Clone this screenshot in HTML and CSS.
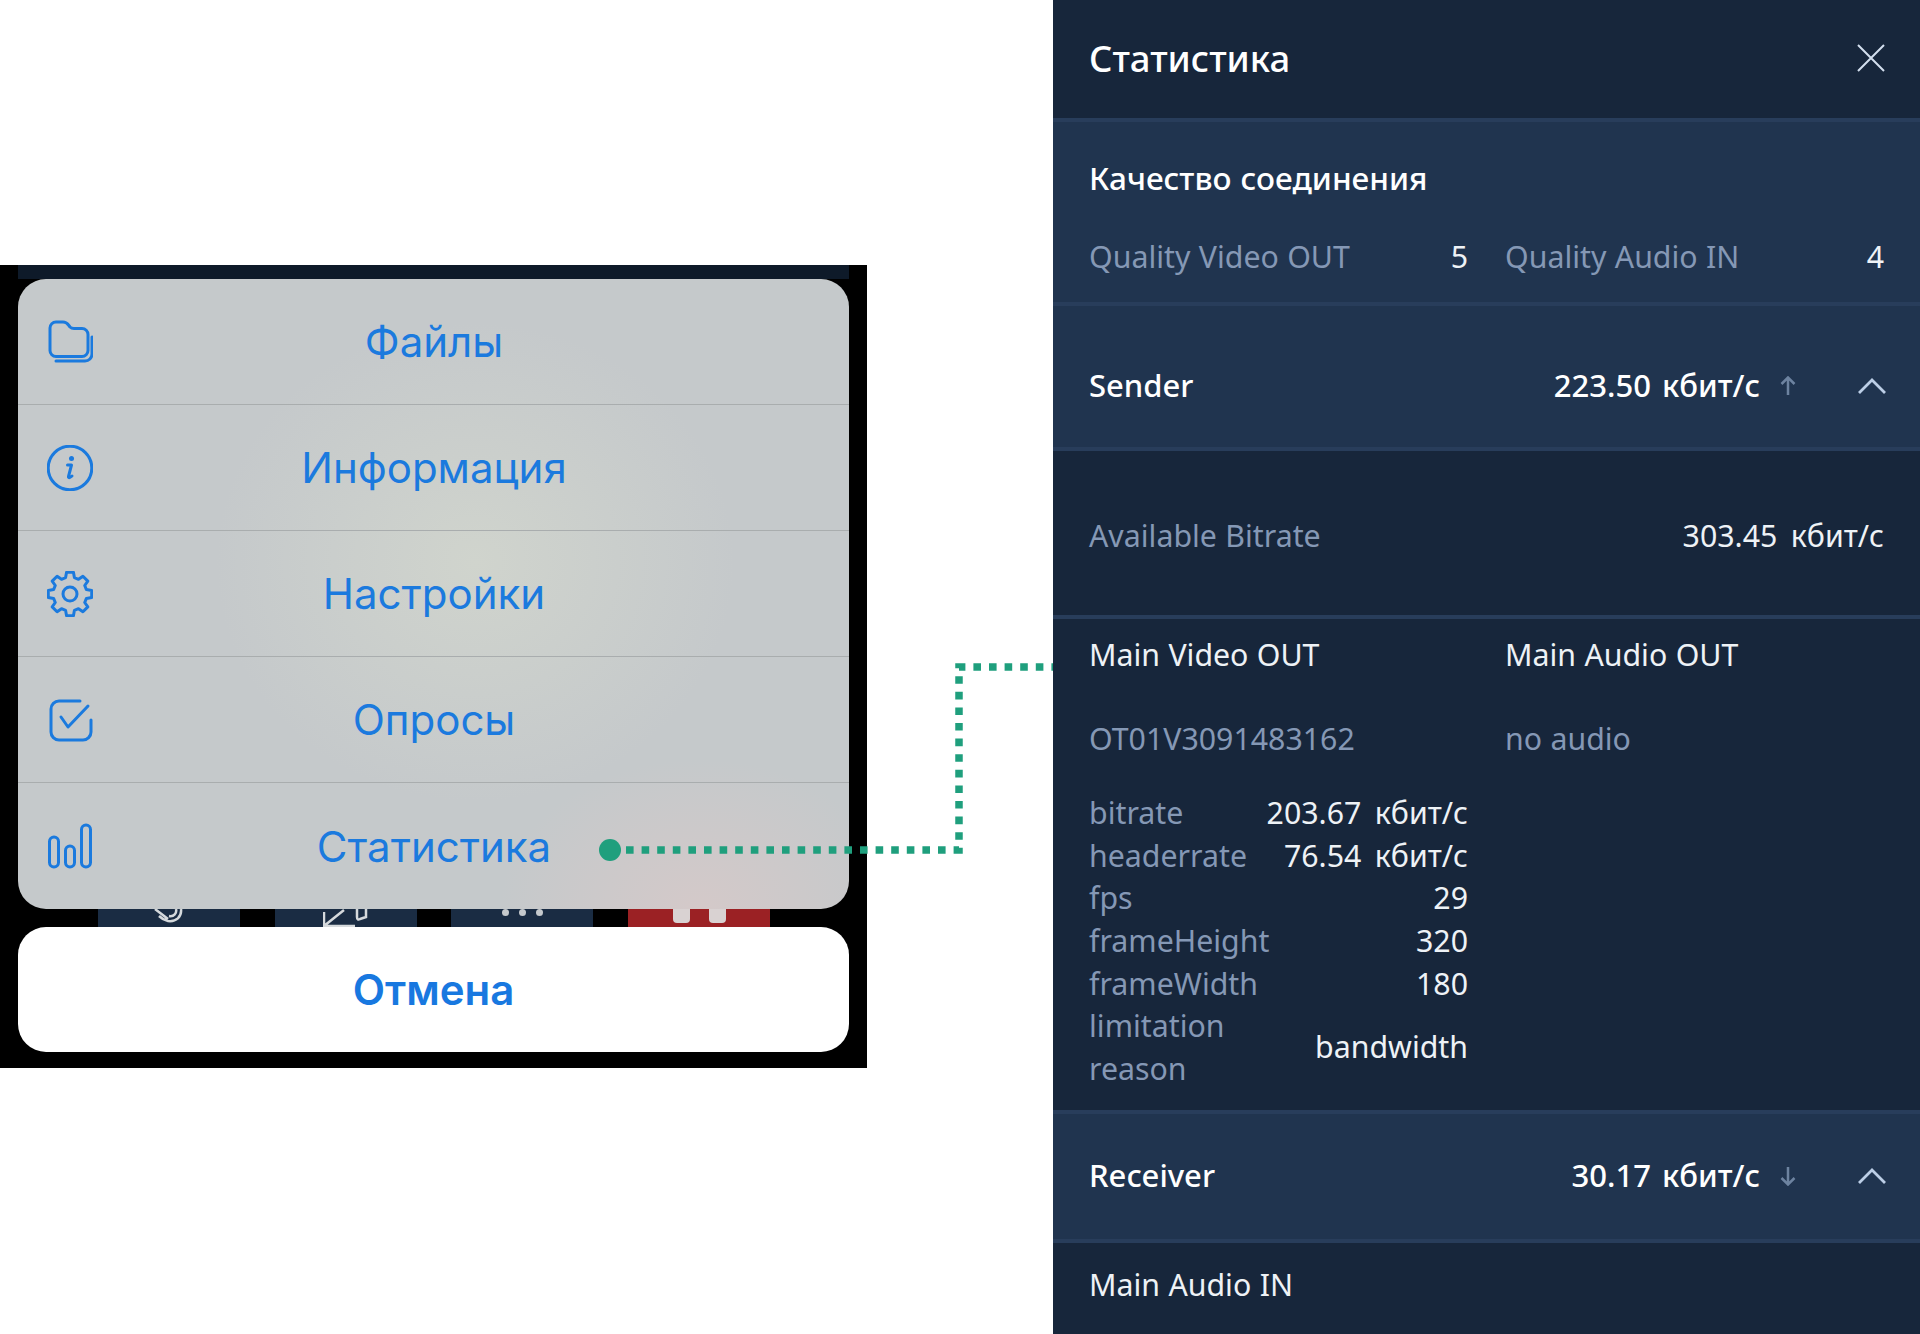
FILE: index.html
```html
<!DOCTYPE html>
<html lang="en">
<head>
    <meta charset="UTF-8">
    <title>Статистика</title>
    <link rel="stylesheet" href="styles.css">
</head>
<body>
    <div class="left-side">
        <div class="phone">
            <div class="top-strip"></div>
            <div class="sheet">
                <div class="sheet-row">
                    <svg class="row-icon" viewBox="0 0 46 46"><path d="M3 9a6 6 0 0 1 6-6h7c3 0 4 1 5.500 3l1.500 2c1 1 2 1.500 4 1.500h8a6 6 0 0 1 6 6v16a6 6 0 0 1-6 6H9a6 6 0 0 1-6-6z"/><path d="M45 18v17a7 7 0 0 1-7 7H9"/></svg>
                    <span class="row-text">Файлы</span>
                </div>
                <div class="sheet-row">
                    <svg class="row-icon" viewBox="0 0 46 46"><circle cx="23" cy="23" r="21.800"/><circle class="icon-fill" cx="24.500" cy="13.500" r="2.500"/><path d="M20.500 20h4l-3 11.500c-.4 1.500 1 1.800 3.500-.5"/></svg>
                    <span class="row-text">Информация</span>
                </div>
                <div class="sheet-row">
                    <svg class="row-icon" viewBox="0 0 46 46"><g transform="translate(23 23)"><path d="M-4.400-16.420L-3.440-21.730 3.440-21.730 4.400-16.420 8.500-14.720 12.930-17.800 17.800-12.930 14.720-8.500 16.420-4.400 21.730-3.440 21.730 3.440 16.420 4.400 14.720 8.500 17.800 12.930 12.930 17.800 8.500 14.720 4.400 16.420 3.440 21.730-3.440 21.730-4.400 16.420-8.500 14.720-12.930 17.800-17.800 12.930-14.720 8.500-16.420 4.400-21.730 3.440-21.730-3.440-16.420-4.400-14.720-8.500-17.800-12.930-12.930-17.800-8.500-14.720z"/><circle r="7"/></g></svg>
                    <span class="row-text">Настройки</span>
                </div>
                <div class="sheet-row">
                    <svg class="row-icon" viewBox="0 0 46 46"><path d="M33 4H12a8 8 0 0 0-8 8v23a8 8 0 0 0 8 8h24a8 8 0 0 0 8-8V23"/><path d="M14 20l7 10L41 9"/></svg>
                    <span class="row-text">Опросы</span>
                </div>
                <div class="sheet-row">
                    <svg class="row-icon" viewBox="0 0 46 46"><rect x="2.500" y="14" width="9" height="30" rx="4.500"/><rect x="18.500" y="23" width="9" height="21" rx="4.500"/><rect x="34.500" y="2" width="9" height="42" rx="4.500"/></svg>
                    <span class="row-text">Статистика</span>
                </div>
            </div>
            <div class="call-buttons">
                <div class="call-btn">
                    <svg width="30" height="18" viewBox="0 0 30 18"><path d="M1 0l13 10M22 0c1 4-2 8-7 7M27 0c1 8-5 13-13 12-4-1-7-3-9-5"/></svg>
                </div>
                <div class="call-btn">
                    <svg width="46" height="18" viewBox="0 0 46 18"><path d="M1 17L21 1M1 3v14h31M34 0v8c0 2 1 3 3 2l6-2V0"/></svg>
                </div>
                <div class="call-btn call-dots"><i></i><i></i><i></i></div>
                <div class="call-btn call-end"><i></i><i></i></div>
            </div>
            <div class="cancel">Отмена</div>
        </div>
    </div>

    <div class="panel">
        <div class="panel-header">
            <span class="panel-title">Статистика</span>
            <svg class="close-icon" viewBox="0 0 28 28"><path d="M1 1l26 26M27 1L1 27"/></svg>
        </div>

        <div class="section light quality">
            <div class="section-title">Качество соединения</div>
            <div class="two-col">
                <div class="pair"><span class="muted">Quality Video OUT</span><span>5</span></div>
                <div class="pair"><span class="muted">Quality Audio IN</span><span>4</span></div>
            </div>
        </div>

        <div class="section light group-head sender">
            <span class="section-title">Sender</span>
            <span class="group-value">223.50 кбит/с</span>
            <svg class="arrow-icon" viewBox="0 0 16 20"><path d="M8 19V2M1.500 8L8 1.500 14.500 8"/></svg>
            <svg class="chevron-icon" viewBox="0 0 28 16"><path d="M1 15L14 2l13 13"/></svg>
        </div>

        <div class="section available">
            <div class="pair"><span class="muted">Available Bitrate</span><span class="value">303.45 кбит/с</span></div>
        </div>

        <div class="section streams">
            <div class="two-col">
                <div>
                    <div class="stream-name">Main Video OUT</div>
                    <div class="muted stream-id">OT01V3091483162</div>
                    <div class="pair"><span class="muted">bitrate</span><span class="value">203.67 кбит/с</span></div>
                    <div class="pair"><span class="muted">headerrate</span><span class="value">76.54 кбит/с</span></div>
                    <div class="pair"><span class="muted">fps</span><span>29</span></div>
                    <div class="pair"><span class="muted">frameHeight</span><span>320</span></div>
                    <div class="pair"><span class="muted">frameWidth</span><span>180</span></div>
                    <div class="pair"><span class="muted wrap-label">limitation reason</span><span>bandwidth</span></div>
                </div>
                <div>
                    <div class="stream-name">Main Audio OUT</div>
                    <div class="muted stream-id">no audio</div>
                </div>
            </div>
        </div>

        <div class="section light group-head receiver">
            <span class="section-title">Receiver</span>
            <span class="group-value">30.17 кбит/с</span>
            <svg class="arrow-icon" viewBox="0 0 16 20"><path d="M8 1v17M1.500 12L8 18.500 14.500 12"/></svg>
            <svg class="chevron-icon" viewBox="0 0 28 16"><path d="M1 15L14 2l13 13"/></svg>
        </div>

        <div class="section audio-in">
            <div class="stream-name">Main Audio IN</div>
        </div>
    </div>

    <svg class="connector" width="1920" height="1334" viewBox="0 0 1920 1334">
        <circle cx="610" cy="850" r="11"/>
        <path d="M626 850H959V667H1053"/>
    </svg>
</body>
</html>
```

FILE: styles.css
```css
* {
    box-sizing: border-box;
}
body {
    margin: 0;
    width: 1920px;
    height: 1334px;
    overflow: hidden;
    display: flex;
    background-color: #fff;
    font-family: "Noto Sans", sans-serif;
}
.left-side {
    width: 1053px;
    padding-top: 265px;
}
.phone {
    width: 867px;
    height: 803px;
    padding: 0 18px;
    background-color: #000;
    font-family: Inter, sans-serif;
}
.top-strip {
    height: 14px;
    background-color: #0e1a29;
}
.sheet {
    height: 630px;
    border-radius: 28px;
    overflow: hidden;
    background-color: #c5c9cb;
    background-image:
        radial-gradient(ellipse 260px 240px at 55% 45%, #d0d4cd, rgba(208, 212, 205, 0)),
        radial-gradient(ellipse 200px 150px at 82% 100%, #d4c9c9, rgba(212, 201, 201, 0));
}
.sheet-row {
    height: 126px;
    display: grid;
    grid-template-columns: 1fr auto 1fr;
    align-items: center;
    padding-left: 29px;
    border-bottom: 1px solid #a9adae;
}
.sheet-row:last-child {
    border-bottom: none;
}
.row-icon {
    width: 46px;
    height: 46px;
    fill: none;
    stroke: #1b7ade;
    stroke-width: 3;
    stroke-linecap: round;
    stroke-linejoin: round;
}
.icon-fill {
    fill: #1b7ade;
    stroke: none;
}
.row-text {
    font-size: 42px;
    color: #1b7ade;
    grid-column: 2;
    transform: translateX(-14px);
}
.call-buttons {
    height: 18px;
    display: flex;
    gap: 34.700px;
    padding-left: 80px;
    overflow: hidden;
}
.call-btn {
    width: 142px;
    height: 18px;
    background-color: #1a2c43;
    display: flex;
    justify-content: center;
    gap: 10px;
}
.call-btn svg {
    fill: none;
    stroke: #d5d9dc;
    stroke-width: 2.500;
}
.call-dots i {
    width: 7px;
    height: 7px;
    border-radius: 50%;
    background-color: #c5c9cc;
}
.call-end {
    background-color: #9b2124;
    gap: 19px;
}
.call-end i {
    width: 17px;
    height: 14px;
    border-radius: 0 0 4px 4px;
    background-color: #d9d2d2;
}
.cancel {
    height: 125px;
    border-radius: 28px;
    background-color: #fff;
    color: #1878e0;
    font-size: 42px;
    font-weight: 600;
    display: flex;
    align-items: center;
    justify-content: center;
}

.panel {
    width: 867px;
    height: 1334px;
    overflow: hidden;
    background-color: #17263b;
    color: #eef2f6;
    font-size: 30.300px;
    line-height: 42.600px;
    word-spacing: .5px;
}
.panel-header {
    height: 118px;
    padding: 0 35px 2px 36px;
    display: flex;
    align-items: center;
    justify-content: space-between;
}
.panel-title {
    font-size: 36.500px;
    font-weight: 500;
    color: #fff;
}
.close-icon {
    width: 28px;
    height: 28px;
    fill: none;
    stroke: #d3dfee;
    stroke-width: 2;
}
.section {
    border-top: 4px solid #283d5b;
    padding-left: 36px;
    padding-right: 36px;
}
.light {
    background-color: #20344f;
}
.section-title {
    font-size: 31px;
    font-weight: 500;
    color: #fff;
}
.quality {
    height: 184px;
    padding-top: 35px;
}
.quality .section-title {
    font-size: 31.500px;
    word-spacing: 1px;
}
.quality .two-col {
    margin-top: 36px;
}
.two-col {
    display: grid;
    grid-template-columns: 379px 379px;
    gap: 37px;
}
.pair {
    display: flex;
    align-items: center;
    justify-content: space-between;
}
.muted {
    color: #8598b5;
}
.value {
    word-spacing: 5.500px;
}
.wrap-label {
    width: 180px;
}
.group-head {
    display: flex;
    align-items: center;
    padding-right: 34px;
}
.group-value {
    margin-left: auto;
    font-size: 31px;
    font-weight: 500;
    word-spacing: 3px;
    color: #fff;
}
.arrow-icon {
    width: 16px;
    height: 20px;
    margin-left: 20px;
    fill: none;
    stroke: #6d83a0;
    stroke-width: 2.500;
}
.chevron-icon {
    width: 28px;
    height: 16px;
    margin-left: 62px;
    fill: none;
    stroke: #bccee6;
    stroke-width: 2.800;
}
.sender {
    height: 145px;
    padding-top: 18px;
}
.available {
    height: 168px;
    padding-top: 64px;
}
.streams {
    height: 495px;
    padding-top: 15px;
}
.stream-name {
    margin-bottom: 41px;
}
.stream-id {
    margin-bottom: 32px;
}
.receiver {
    height: 129px;
    padding-bottom: 2px;
}
.audio-in {
    padding-top: 21px;
}

.connector {
    position: absolute;
    top: 0;
    left: 0;
    pointer-events: none;
}
.connector circle {
    fill: #1f9f7d;
}
.connector path {
    fill: none;
    stroke: #1f9f7d;
    stroke-width: 7.500;
    stroke-dasharray: 7.600 8;
}
```
